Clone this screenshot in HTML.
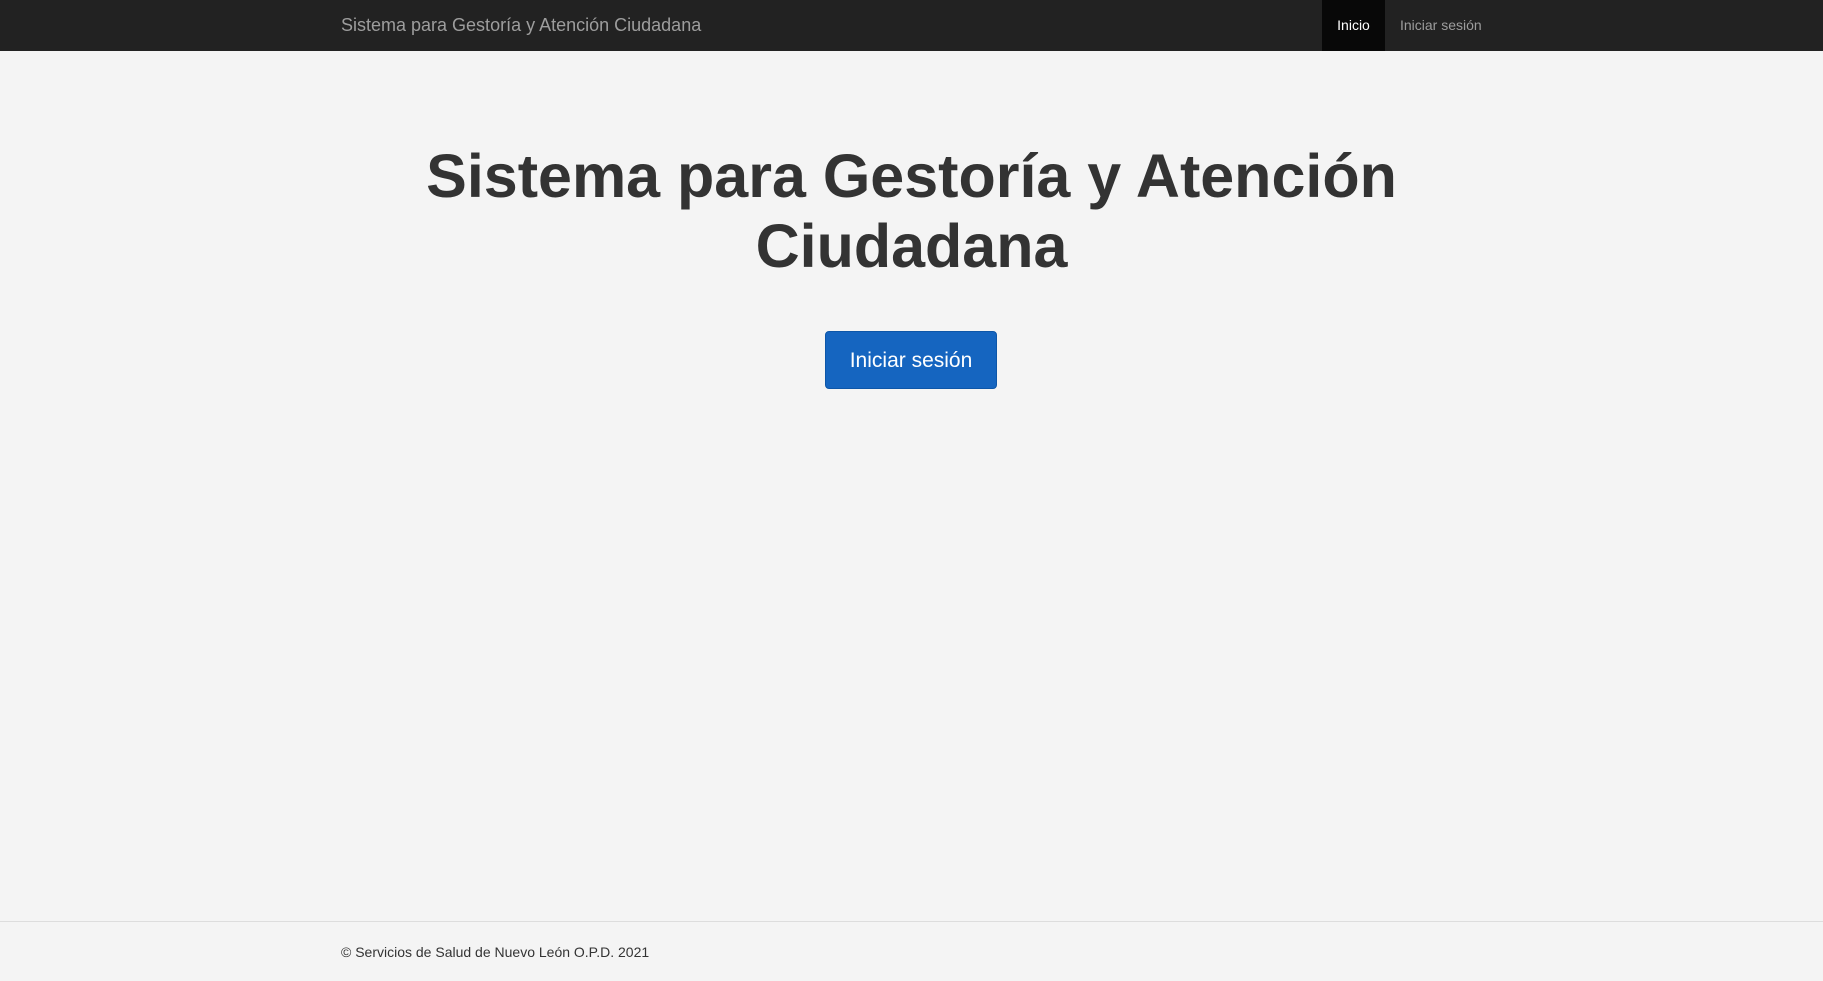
<!DOCTYPE html>
<html><head><meta charset="utf-8"><style>
body{margin:0;background:#f4f4f4;font-family:"Liberation Sans",sans-serif;width:1823px;height:981px;position:relative;overflow:hidden}
.nav{position:absolute;top:0;left:0;right:0;height:51px;background:#222}
.brand{position:absolute;left:341px;top:0;line-height:50px;font-size:18px;color:#9d9d9d}
.act{position:absolute;left:1322px;width:63px;top:0;height:51px;background:#080808;color:#fff;font-size:14px;line-height:51px;text-align:center}
.lnk{position:absolute;left:1400px;top:0;line-height:51px;font-size:14px;color:#9d9d9d}
h1{position:absolute;top:141px;left:0;right:0;margin:0;text-align:center;font-size:61px;line-height:70px;font-weight:bold;color:#333}
.btn{position:absolute;left:825px;top:331px;width:172px;height:58px;background:#1565c0;border:1px solid #0d56a8;border-radius:4px;box-sizing:border-box;color:#fff;font-size:21px;line-height:57px;text-align:center}
.foot{position:absolute;top:921px;left:0;right:0;bottom:0;border-top:1px solid #ddd}
.ft{position:absolute;left:341px;top:944px;font-size:14px;color:#333}
</style></head><body>
<div class="nav"><div class="brand">Sistema para Gestoría y Atención Ciudadana</div><div class="act">Inicio</div><div class="lnk">Iniciar sesión</div></div>
<h1>Sistema para Gestoría y Atención<br>Ciudadana</h1>
<div class="btn">Iniciar sesión</div>
<div class="foot"></div>
<div class="ft">© Servicios de Salud de Nuevo León O.P.D. 2021</div>
</body></html>
